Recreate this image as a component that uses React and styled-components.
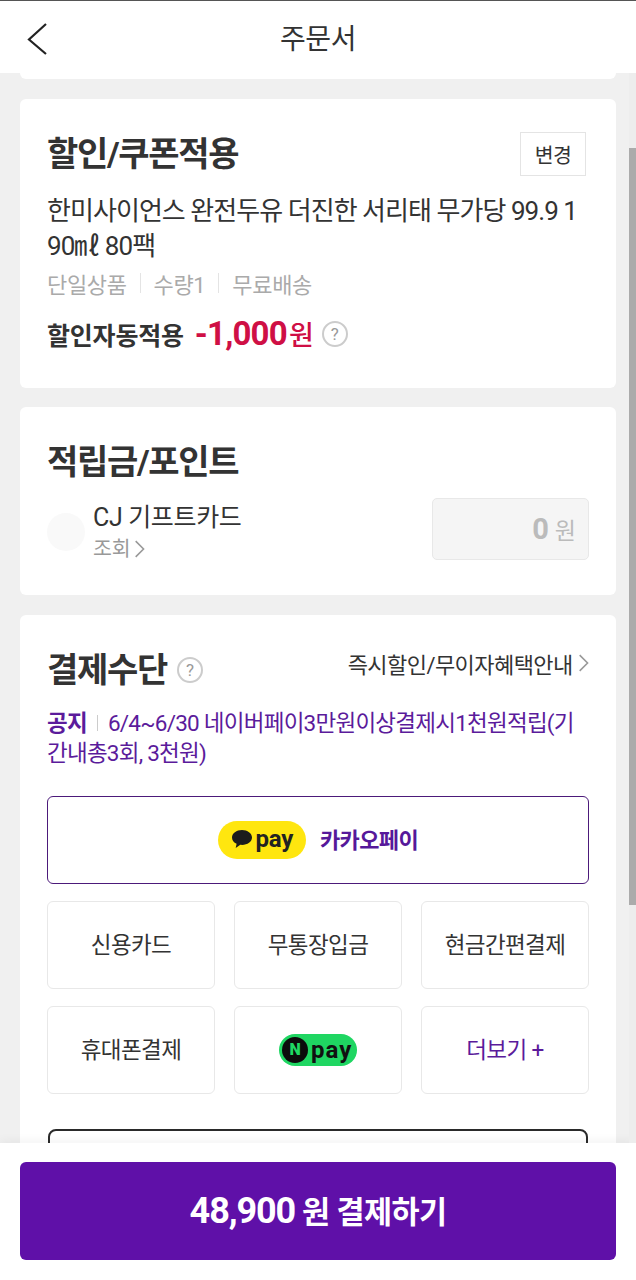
import styled, { createGlobalStyle } from "styled-components";

const GlobalStyle = createGlobalStyle`
  html, body {
    margin: 0;
    padding: 0;
    background: #f0f0f0;
  }
  * {
    box-sizing: border-box;
  }
  body {
    font-family: Roboto, "Noto Sans CJK KR", sans-serif;
    color: #333;
  }
`;

const Page = styled.div`
  position: relative;
  display: flex;
  flex-direction: column;
  width: 636px;
  height: 1280px;
  overflow: hidden;
  border-top: 1px solid #555;
`;

const Header = styled.header`
  flex: none;
  display: flex;
  align-items: center;
  justify-content: center;
  position: relative;
  height: 72px;
  background: #fff;
  font-size: 28px;
  letter-spacing: -0.5px;
  color: #333;
`;

const BackButton = styled.svg`
  position: absolute;
  left: 26px;
  top: 21px;
  width: 22px;
  height: 34px;
`;

const Scroller = styled.main`
  flex: 1;
  min-height: 0;
  overflow: hidden;
  display: flex;
  flex-direction: column;
  gap: 19.5px;
  padding: 0 20px;
`;

const CardTail = styled.div`
  flex: none;
  height: 6px;
  background: #fff;
  border-radius: 0 0 6px 6px;
`;

const Card = styled.section`
  flex: none;
  background: #fff;
  border-radius: 6px;
  padding: ${(p) => p.$padding || "30px 27px 0"};
  height: ${(p) => p.$height};
`;

const TitleRow = styled.div`
  display: flex;
  align-items: ${(p) => p.$align || "center"};
  justify-content: space-between;
`;

const TitleGroup = styled.div`
  display: flex;
  align-items: center;
  gap: 10px;
`;

const Title = styled.h2`
  margin: 0;
  font-size: 34px;
  line-height: 50px;
  font-weight: 700;
  letter-spacing: -1.3px;
  color: #333;
`;

const ChangeButton = styled.div`
  width: 66px;
  height: 44px;
  margin-top: 3px;
  margin-right: 3px;
  display: flex;
  align-items: center;
  justify-content: center;
  border: 1px solid #e4e4e4;
  font-size: 20.5px;
  letter-spacing: -0.5px;
  color: #333;
`;

const ProductName = styled.p`
  margin: 15px 0 0;
  font-size: 26px;
  line-height: 35px;
  letter-spacing: -0.95px;
  color: #333;
  word-break: break-all;
`;

const MetaRow = styled.div`
  display: flex;
  align-items: center;
  margin-top: 1px;
  height: 36px;
  font-size: 22px;
  letter-spacing: -0.35px;
  color: #aaa;
`;

const MetaItem = styled.span`
  & + & {
    margin-left: 13px;
    padding-left: 14px;
    background: linear-gradient(#e4e4e4, #e4e4e4) left center / 1px 20px no-repeat;
  }
`;

const DiscountRow = styled.div`
  display: flex;
  align-items: center;
  margin-top: 11px;
  height: 44px;
`;

const DiscountLabel = styled.span`
  font-size: 25px;
  font-weight: 700;
  letter-spacing: -0.2px;
  color: #333;
`;

const DiscountValue = styled.strong`
  margin-left: 11px;
  font-size: 33px;
  font-weight: 700;
  letter-spacing: -0.8px;
  color: #cf0f45;
`;

const DiscountUnit = styled.span`
  margin-left: 2px;
  font-size: 27px;
  font-weight: 500;
  color: #cf0f45;
`;

const HelpBadge = styled.span`
  flex: none;
  width: 26px;
  height: 26px;
  margin-left: ${(p) => p.$gap || "8px"};
  display: inline-flex;
  align-items: center;
  justify-content: center;
  border: 2px solid #ccc;
  border-radius: 50%;
  font-size: 17px;
  color: #999;
`;

const PointRow = styled.div`
  display: flex;
  align-items: flex-start;
  justify-content: space-between;
  margin-top: 11px;
`;

const PointLeft = styled.div`
  display: flex;
  align-items: center;
  gap: 8px;
  margin-top: 2px;
`;

const Dot = styled.span`
  width: 38px;
  height: 38px;
  border-radius: 50%;
  background: #f9f9f9;
`;

const PointName = styled.div`
  font-size: 25px;
  line-height: 35px;
  letter-spacing: -0.35px;
  color: #333;
`;

const LookupLink = styled.div`
  display: flex;
  align-items: center;
  gap: 3px;
  font-size: 20.5px;
  line-height: 28px;
  color: #999;
`;

const PointInput = styled.div`
  width: 157px;
  height: 62px;
  display: flex;
  align-items: center;
  justify-content: flex-end;
  gap: 6px;
  padding-right: 12px;
  background: #f5f5f5;
  border: 1px solid #e8e8e8;
  border-radius: 5px;
  color: #bbb;
`;

const PointZero = styled.strong`
  font-size: 29px;
  font-weight: 700;
`;

const PointUnit = styled.span`
  font-size: 23px;
`;

const BenefitLink = styled.div`
  display: flex;
  align-items: center;
  gap: 5px;
  margin-bottom: 14px;
  font-size: 22px;
  letter-spacing: -0.55px;
  color: #333;
`;

const Notice = styled.p`
  margin: 13px 0 0;
  font-size: 22.5px;
  line-height: 30px;
  letter-spacing: -0.75px;
  color: #5b1b9b;
  word-break: break-all;
`;

const NoticeLabel = styled.strong`
  font-weight: 700;
`;

const NoticeBar = styled.span`
  display: inline-block;
  width: 1px;
  height: 16px;
  margin: 0 10px;
  background: #ccc;
`;

const KakaoOption = styled.div`
  display: flex;
  align-items: center;
  justify-content: center;
  gap: 14px;
  height: 88px;
  margin-top: 28px;
  border: 1px solid #4c1a7a;
  border-radius: 6px;
`;

const KakaoBadge = styled.span`
  display: inline-flex;
  align-items: center;
  justify-content: center;
  gap: 3px;
  width: 88px;
  height: 38px;
  padding-bottom: 2px;
  background: #ffe60f;
  border-radius: 19px;
  font-size: 24px;
  font-weight: 700;
  letter-spacing: -0.2px;
  color: #222;
`;

const KakaoName = styled.span`
  padding-bottom: 4px;
  font-size: 22px;
  font-weight: 700;
  letter-spacing: -0.6px;
  color: #56189a;
`;

const OptionGrid = styled.div`
  display: grid;
  grid-template-columns: repeat(3, 168px);
  grid-auto-rows: 88px;
  justify-content: space-between;
  row-gap: 17px;
  margin-top: 17px;
`;

const Option = styled.div`
  display: flex;
  align-items: center;
  justify-content: center;
  padding-bottom: ${(p) => (p.$flush ? "0" : "4px")};
  border: 1px solid #e8e8e8;
  border-radius: 6px;
  font-size: 22.5px;
  letter-spacing: -0.6px;
  color: ${(p) => (p.$accent ? "#5b1b9b" : "#333")};
`;

const NaverBadge = styled.span`
  display: inline-flex;
  align-items: center;
  gap: 3px;
  width: 78px;
  height: 32px;
  padding-left: 3px;
  background: #1fd662;
  border-radius: 16px;
  font-size: 24px;
  font-weight: 700;
  letter-spacing: 1px;
  color: #111;
`;

const NaverMark = styled.span`
  width: 26px;
  height: 26px;
  display: inline-flex;
  align-items: center;
  justify-content: center;
  background: #0b0b0b;
  border-radius: 50%;
  font-size: 16px;
  font-weight: 900;
  letter-spacing: 0;
  color: #1fd662;
`;

const NextOption = styled.div`
  height: 60px;
  margin: 35px 1px 0;
  border: 2px solid #2a2a2a;
  border-radius: 8px;
  background: #fff;
`;

const Footer = styled.footer`
  flex: none;
  height: 137px;
  padding: 19px 20px 20px;
  background: #fff;
  box-shadow: 0 -2px 10px rgba(0, 0, 0, 0.05);
  position: relative;
`;

const PayButton = styled.button`
  width: 100%;
  height: 98px;
  padding: 0 0 2px;
  border: 0;
  border-radius: 6px;
  background: #5f10a8;
  color: #fff;
  font-family: inherit;
  font-size: 30.5px;
  font-weight: 700;
  letter-spacing: -0.6px;
`;

const PayAmount = styled.span`
  font-size: 36px;
  letter-spacing: -1.1px;
`;

const ScrollTrack = styled.div`
  position: absolute;
  top: 72px;
  right: 0;
  bottom: 137px;
  width: 7px;
  background: #ededed;
`;

const ScrollThumb = styled.div`
  position: absolute;
  top: 75px;
  left: 0;
  right: 0;
  height: 757px;
  background: #ababab;
`;

const Chevron = ({ size = 20, color = "#999" }) => (
  <svg width={size / 1.6} height={size} viewBox="0 0 10 16" fill="none">
    <path d="M1.5 1 L8.5 8 L1.5 15" stroke={color} strokeWidth="1.4" />
  </svg>
);

export default function App() {
  return (
    <Page>
      <GlobalStyle />
      <Header>
        <BackButton viewBox="0 0 22 34" fill="none">
          <path d="M20 2 L3 17.5 L20 32" stroke="#222" strokeWidth="2.2" />
        </BackButton>
        주문서
      </Header>
      <Scroller>
        <CardTail />
        <Card $height="289px">
          <TitleRow $align="flex-start">
            <Title>할인/쿠폰적용</Title>
            <ChangeButton>변경</ChangeButton>
          </TitleRow>
          <ProductName>한미사이언스 완전두유 더진한 서리태 무가당 99.9 190㎖ 80팩</ProductName>
          <MetaRow>
            <MetaItem>단일상품</MetaItem>
            <MetaItem>수량1</MetaItem>
            <MetaItem>무료배송</MetaItem>
          </MetaRow>
          <DiscountRow>
            <DiscountLabel>할인자동적용</DiscountLabel>
            <DiscountValue>-1,000</DiscountValue>
            <DiscountUnit>원</DiscountUnit>
            <HelpBadge>?</HelpBadge>
          </DiscountRow>
        </Card>
        <Card $height="188px">
          <Title>적립금/포인트</Title>
          <PointRow>
            <PointLeft>
              <Dot />
              <div>
                <PointName>CJ 기프트카드</PointName>
                <LookupLink>
                  조회
                  <Chevron size={18} />
                </LookupLink>
              </div>
            </PointLeft>
            <PointInput>
              <PointZero>0</PointZero>
              <PointUnit>원</PointUnit>
            </PointInput>
          </PointRow>
        </Card>
        <Card $padding="30px 27px 40px">
          <TitleRow>
            <TitleGroup>
              <Title>결제수단</Title>
              <HelpBadge $gap="0">?</HelpBadge>
            </TitleGroup>
            <BenefitLink>
              즉시할인/무이자혜택안내
              <Chevron size={18} />
            </BenefitLink>
          </TitleRow>
          <Notice>
            <NoticeLabel>공지</NoticeLabel>
            <NoticeBar />
            6/4~6/30 네이버페이3만원이상결제시1천원적립(기간내총3회, 3천원)
          </Notice>
          <KakaoOption>
            <KakaoBadge>
              <svg width="22" height="20" viewBox="0 0 22 20">
                <path
                  d="M11 1C5.5 1 1 4.3 1 8.5c0 2.7 1.8 5 4.6 6.3L4.7 19l4.6-3.2c.6.1 1.1.1 1.7.1 5.5 0 10-3.3 10-7.4S16.5 1 11 1z"
                  fill="#1c1c1c"
                />
              </svg>
              pay
            </KakaoBadge>
            <KakaoName>카카오페이</KakaoName>
          </KakaoOption>
          <OptionGrid>
            <Option>신용카드</Option>
            <Option>무통장입금</Option>
            <Option>현금간편결제</Option>
            <Option>휴대폰결제</Option>
            <Option $flush>
              <NaverBadge>
                <NaverMark>N</NaverMark>
                pay
              </NaverBadge>
            </Option>
            <Option $accent>더보기 +</Option>
          </OptionGrid>
          <NextOption />
        </Card>
      </Scroller>
      <Footer>
        <PayButton>
          <PayAmount>48,900</PayAmount> 원 결제하기
        </PayButton>
      </Footer>
      <ScrollTrack>
        <ScrollThumb />
      </ScrollTrack>
    </Page>
  );
}
